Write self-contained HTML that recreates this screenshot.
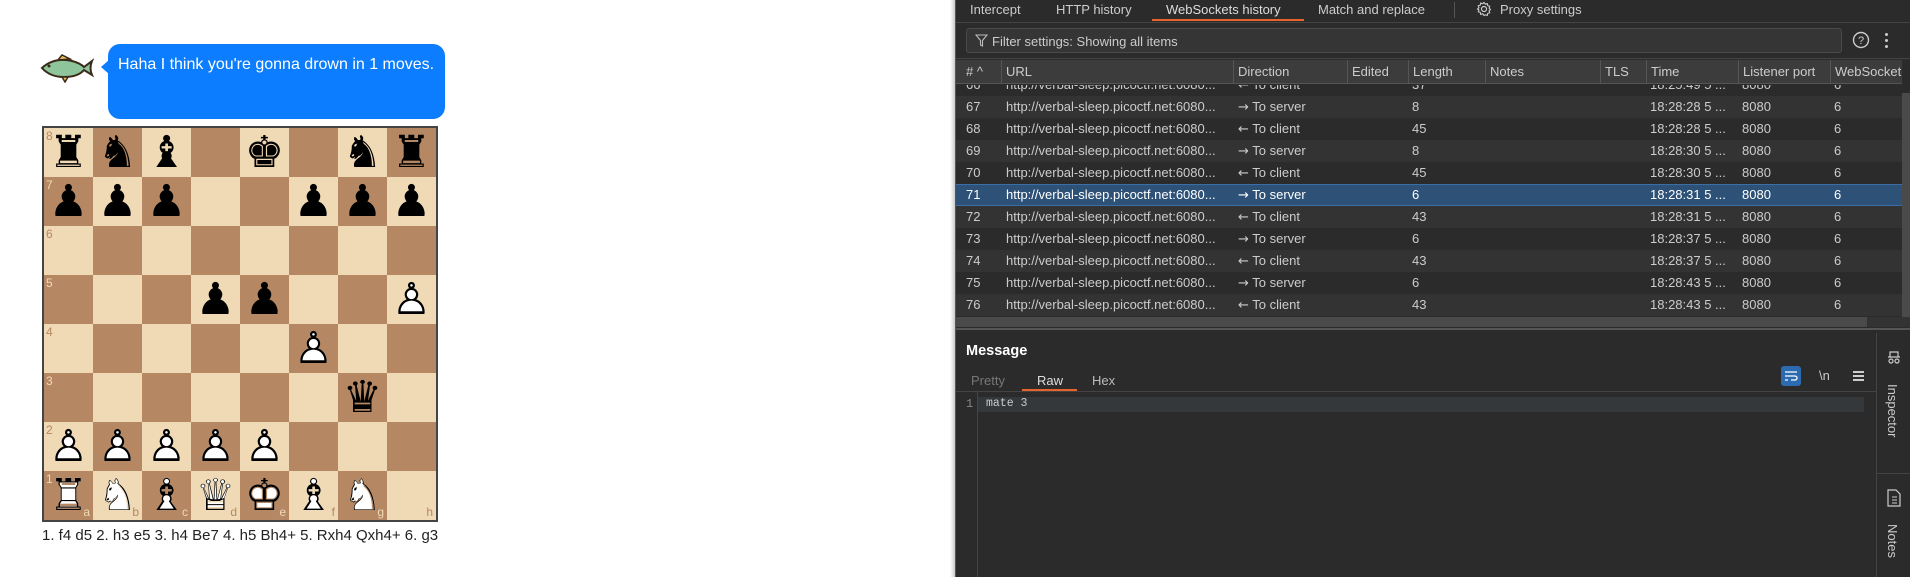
<!DOCTYPE html>
<html><head><meta charset="utf-8"><style>
*{margin:0;padding:0;box-sizing:border-box}
body{width:1910px;height:577px;overflow:hidden;background:#fff;font-family:"Liberation Sans","DejaVu Sans",sans-serif;position:relative}
.abs{position:absolute}
.bubble{left:108px;top:44px;width:337px;height:75px;background:#0b7dfe;border-radius:12px;color:#fff;font-size:16px;padding:12px 0 0 10px;white-space:nowrap}
.bubble:before{content:"";position:absolute;left:-7px;top:16px;border-right:8px solid #0b7dfe;border-top:7px solid transparent;border-bottom:7px solid transparent}
.board{left:42px;top:126px;width:396px;height:396px;border:2px solid #444;display:grid;grid-template-columns:repeat(8,49px);grid-template-rows:repeat(8,49px)}
.sq{position:relative;font-family:"DejaVu Sans",sans-serif;font-size:44px;line-height:49px;text-align:center;color:#000}
.w{position:relative;display:inline-block}
.w i{font-style:normal;position:absolute;left:0;top:0;color:#fff}
.w b{font-weight:normal;position:relative}
.rk{position:absolute;left:2px;top:1px;font-size:12px;line-height:14px;font-family:"Liberation Sans",sans-serif}
.fl{position:absolute;right:3px;bottom:1px;font-size:12px;line-height:14px;font-family:"Liberation Sans",sans-serif}
.l{background:#f0d9b5}.d{background:#b58863}
.l .rk,.l .fl{color:#b58863}.d .rk,.d .fl{color:#f0d9b5}
.moves{left:42px;top:527px;font-size:15px;color:#222}
.panel{left:955px;top:0;width:955px;height:577px;background:#2b2b2b;border-left:1px solid #555;color:#ccc;font-size:13px}
.shadow{left:950px;top:0;width:5px;height:577px;background:linear-gradient(to right,#fff,#ccc)}
.tab{position:absolute;top:2px;color:#ccc;font-size:13px}
.hdr{position:absolute;top:60px;left:0;width:946px;height:24px;background:#3c3c3c;border-bottom:1px solid #555}
.hc{position:absolute;top:0;height:24px;line-height:24px;border-left:1px solid #555;padding-left:4px;color:#ccc}
.row{position:absolute;left:0;width:946px;height:22px;line-height:22px;color:#ccc}
.row > span{position:absolute;top:0}
.ar{font-family:"DejaVu Sans",sans-serif;font-size:13px;position:static}
</style></head><body>
<svg class="abs" style="left:38px;top:53px" width="56" height="30" viewBox="0 0 56 30">
<path d="M4 15 Q16 4 34 8 Q42 10 46 14 L54 8 Q51 15 54 22 L46 17 Q40 24 26 24 Q12 24 4 15Z" fill="#8fc59a" stroke="#3a2a1a" stroke-width="2"/>
<path d="M20 7 L24 2 L32 6Z M24 24 L27 29 L30 24Z" fill="#e8c15a" stroke="#3a2a1a" stroke-width="1.5"/>
<circle cx="11" cy="13" r="1.5" fill="#3a2a1a"/>
</svg>
<div class="abs bubble">Haha I think you're gonna drown in 1 moves.</div>
<div class="abs board">
<div class="sq l"><span class="rk">8</span>♜</div><div class="sq d">♞</div><div class="sq l">♝</div><div class="sq d"></div><div class="sq l">♚</div><div class="sq d"></div><div class="sq l">♞</div><div class="sq d">♜</div>
<div class="sq d"><span class="rk">7</span>♟</div><div class="sq l">♟</div><div class="sq d">♟</div><div class="sq l"></div><div class="sq d"></div><div class="sq l">♟</div><div class="sq d">♟</div><div class="sq l">♟</div>
<div class="sq l"><span class="rk">6</span></div><div class="sq d"></div><div class="sq l"></div><div class="sq d"></div><div class="sq l"></div><div class="sq d"></div><div class="sq l"></div><div class="sq d"></div>
<div class="sq d"><span class="rk">5</span></div><div class="sq l"></div><div class="sq d"></div><div class="sq l">♟</div><div class="sq d">♟</div><div class="sq l"></div><div class="sq d"></div><div class="sq l"><span class="w"><i>♟</i><b>♙</b></span></div>
<div class="sq l"><span class="rk">4</span></div><div class="sq d"></div><div class="sq l"></div><div class="sq d"></div><div class="sq l"></div><div class="sq d"><span class="w"><i>♟</i><b>♙</b></span></div><div class="sq l"></div><div class="sq d"></div>
<div class="sq d"><span class="rk">3</span></div><div class="sq l"></div><div class="sq d"></div><div class="sq l"></div><div class="sq d"></div><div class="sq l"></div><div class="sq d">♛</div><div class="sq l"></div>
<div class="sq l"><span class="rk">2</span><span class="w"><i>♟</i><b>♙</b></span></div><div class="sq d"><span class="w"><i>♟</i><b>♙</b></span></div><div class="sq l"><span class="w"><i>♟</i><b>♙</b></span></div><div class="sq d"><span class="w"><i>♟</i><b>♙</b></span></div><div class="sq l"><span class="w"><i>♟</i><b>♙</b></span></div><div class="sq d"></div><div class="sq l"></div><div class="sq d"></div>
<div class="sq d"><span class="rk">1</span><span class="w"><i>♜</i><b>♖</b></span><span class="fl">a</span></div><div class="sq l"><span class="w"><i>♞</i><b>♘</b></span><span class="fl">b</span></div><div class="sq d"><span class="w"><i>♝</i><b>♗</b></span><span class="fl">c</span></div><div class="sq l"><span class="w"><i>♛</i><b>♕</b></span><span class="fl">d</span></div><div class="sq d"><span class="w"><i>♚</i><b>♔</b></span><span class="fl">e</span></div><div class="sq l"><span class="w"><i>♝</i><b>♗</b></span><span class="fl">f</span></div><div class="sq d"><span class="w"><i>♞</i><b>♘</b></span><span class="fl">g</span></div><div class="sq l"><span class="fl">h</span></div>
</div>
<div class="abs moves">1. f4 d5 2. h3 e5 3. h4 Be7 4. h5 Bh4+ 5. Rxh4 Qxh4+ 6. g3</div>

<div class="abs shadow"></div>
<div class="abs panel">
 <div class="tab" style="left:14px">Intercept</div>
 <div class="tab" style="left:100px">HTTP history</div>
 <div class="tab" style="left:210px;color:#ddd">WebSockets history</div>
 <div class="abs" style="left:196px;top:19px;width:152px;height:2px;background:#e8622c"></div>
 <div class="tab" style="left:362px">Match and replace</div>
 <div class="abs" style="left:498px;top:2px;width:1px;height:16px;background:#555"></div>
 <svg class="abs" style="left:520px;top:1px" width="16" height="16" viewBox="0 0 16 16"><circle cx="8" cy="8" r="2.5" fill="none" stroke="#ccc" stroke-width="1.2"/><path d="M8 1.5l1.3 1.7 2-.6.4 2 2 .6-.6 2 1.4 1.3-1.4 1.3.6 2-2 .6-.4 2-2-.6L8 14.5l-1.3-1.7-2 .6-.4-2-2-.6.6-2L1.5 8l1.4-1.3-.6-2 2-.6.4-2 2 .6z" fill="none" stroke="#ccc" stroke-width="1.1"/></svg>
 <div class="tab" style="left:544px">Proxy settings</div>
 <div class="abs" style="left:0;top:22px;width:955px;height:1px;background:#444"></div>
 <div class="abs" style="left:10px;top:28px;width:876px;height:25px;background:#353535;border:1px solid #4a4a4a;border-radius:3px"></div>
 <svg class="abs" style="left:19px;top:34px" width="13" height="13" viewBox="0 0 13 13"><path d="M1 1h11L7.5 6.5V12L5.5 11V6.5z" fill="none" stroke="#bbb" stroke-width="1.1"/></svg>
 <div class="abs" style="left:36px;top:34px;color:#ccc">Filter settings: Showing all items</div>
 <svg class="abs" style="left:896px;top:31px" width="18" height="18" viewBox="0 0 18 18"><circle cx="9" cy="9" r="7.5" fill="none" stroke="#ccc" stroke-width="1.4"/><text x="9" y="13" text-anchor="middle" font-size="11" fill="#ccc" font-family="Liberation Sans">?</text></svg>
 <div class="abs" style="left:929px;top:33px;width:3px;height:3px;background:#ccc;border-radius:2px;box-shadow:0 6px #ccc,0 12px #ccc"></div>
 <div class="abs" style="left:0;top:58px;width:955px;height:1px;background:#444"></div>
 <div class="hdr">
  <div class="hc" style="left:0;border:0;padding-left:10px"># ^</div>
  <div class="hc" style="left:45px">URL</div>
  <div class="hc" style="left:277px">Direction</div>
  <div class="hc" style="left:391px">Edited</div>
  <div class="hc" style="left:452px">Length</div>
  <div class="hc" style="left:529px">Notes</div>
  <div class="hc" style="left:644px">TLS</div>
  <div class="hc" style="left:690px">Time</div>
  <div class="hc" style="left:782px">Listener port</div>
  <div class="hc" style="left:874px">WebSocket</div>
 </div>
 <div class="abs" style="left:0;top:85px;width:946px;height:232px;overflow:hidden">
  <div class="row" style="top:-11px;background:#2b2b2b"><span style="left:10px">66</span><span style="left:50px">http://verbal-sleep.picoctf.net:6080...</span><span style="left:282px"><span class="ar">←</span> To client</span><span style="left:456px">37</span><span style="left:694px">18:25:49 5 ...</span><span style="left:786px">8080</span><span style="left:878px">6</span></div>
  <div class="row" style="top:11px;background:#333"><span style="left:10px">67</span><span style="left:50px">http://verbal-sleep.picoctf.net:6080...</span><span style="left:282px"><span class="ar">→</span> To server</span><span style="left:456px">8</span><span style="left:694px">18:28:28 5 ...</span><span style="left:786px">8080</span><span style="left:878px">6</span></div>
  <div class="row" style="top:33px;background:#2b2b2b"><span style="left:10px">68</span><span style="left:50px">http://verbal-sleep.picoctf.net:6080...</span><span style="left:282px"><span class="ar">←</span> To client</span><span style="left:456px">45</span><span style="left:694px">18:28:28 5 ...</span><span style="left:786px">8080</span><span style="left:878px">6</span></div>
  <div class="row" style="top:55px;background:#333"><span style="left:10px">69</span><span style="left:50px">http://verbal-sleep.picoctf.net:6080...</span><span style="left:282px"><span class="ar">→</span> To server</span><span style="left:456px">8</span><span style="left:694px">18:28:30 5 ...</span><span style="left:786px">8080</span><span style="left:878px">6</span></div>
  <div class="row" style="top:77px;background:#2b2b2b"><span style="left:10px">70</span><span style="left:50px">http://verbal-sleep.picoctf.net:6080...</span><span style="left:282px"><span class="ar">←</span> To client</span><span style="left:456px">45</span><span style="left:694px">18:28:30 5 ...</span><span style="left:786px">8080</span><span style="left:878px">6</span></div>
  <div class="row" style="top:99px;background:#2d5177;color:#fff;border-top:1px solid #3a6ea5;border-bottom:1px solid #3a6ea5;line-height:20px"><span style="left:10px">71</span><span style="left:50px">http://verbal-sleep.picoctf.net:6080...</span><span style="left:282px"><span class="ar">→</span> To server</span><span style="left:456px">6</span><span style="left:694px">18:28:31 5 ...</span><span style="left:786px">8080</span><span style="left:878px">6</span></div>
  <div class="row" style="top:121px;background:#333"><span style="left:10px">72</span><span style="left:50px">http://verbal-sleep.picoctf.net:6080...</span><span style="left:282px"><span class="ar">←</span> To client</span><span style="left:456px">43</span><span style="left:694px">18:28:31 5 ...</span><span style="left:786px">8080</span><span style="left:878px">6</span></div>
  <div class="row" style="top:143px;background:#2b2b2b"><span style="left:10px">73</span><span style="left:50px">http://verbal-sleep.picoctf.net:6080...</span><span style="left:282px"><span class="ar">→</span> To server</span><span style="left:456px">6</span><span style="left:694px">18:28:37 5 ...</span><span style="left:786px">8080</span><span style="left:878px">6</span></div>
  <div class="row" style="top:165px;background:#333"><span style="left:10px">74</span><span style="left:50px">http://verbal-sleep.picoctf.net:6080...</span><span style="left:282px"><span class="ar">←</span> To client</span><span style="left:456px">43</span><span style="left:694px">18:28:37 5 ...</span><span style="left:786px">8080</span><span style="left:878px">6</span></div>
  <div class="row" style="top:187px;background:#2b2b2b"><span style="left:10px">75</span><span style="left:50px">http://verbal-sleep.picoctf.net:6080...</span><span style="left:282px"><span class="ar">→</span> To server</span><span style="left:456px">6</span><span style="left:694px">18:28:43 5 ...</span><span style="left:786px">8080</span><span style="left:878px">6</span></div>
  <div class="row" style="top:209px;background:#333"><span style="left:10px">76</span><span style="left:50px">http://verbal-sleep.picoctf.net:6080...</span><span style="left:282px"><span class="ar">←</span> To client</span><span style="left:456px">43</span><span style="left:694px">18:28:43 5 ...</span><span style="left:786px">8080</span><span style="left:878px">6</span></div>
 </div>
 <div class="abs" style="left:946px;top:85px;width:9px;height:232px;background:#2b2b2b"><div style="margin:8px 0 0 0;width:9px;height:224px;background:#4a4a4a"></div></div>
 <div class="abs" style="left:0;top:317px;width:955px;height:10px;background:#333"><div style="width:911px;height:10px;background:#4a4a4a"></div></div>
 <div class="abs" style="left:0;top:328px;width:955px;height:2px;background:#555"></div>
 <div class="abs" style="left:10px;top:343px;font-size:14.5px;font-weight:bold;color:#fff">Message</div>
 <div class="abs" style="left:15px;top:373px;color:#777">Pretty</div>
 <div class="abs" style="left:81px;top:373px;color:#ddd">Raw</div>
 <div class="abs" style="left:136px;top:373px;color:#bbb">Hex</div>
 <div class="abs" style="left:66px;top:389px;width:55px;height:2px;background:#e8622c"></div>
 <div class="abs" style="left:0;top:391px;width:920px;height:1px;background:#444"></div>
 <div class="abs" style="left:825px;top:366px;width:20px;height:20px;background:#2d6bb0;border-radius:3px"></div>
 <svg class="abs" style="left:828px;top:370px" width="14" height="12" viewBox="0 0 14 12"><path d="M1 2h12M1 6h10a2 2 0 010 4H7M1 10h3" fill="none" stroke="#fff" stroke-width="1.3"/></svg>
 <div class="abs" style="left:863px;top:368px;color:#ccc">\n</div>
 <div class="abs" style="left:897px;top:371px;width:11px;height:2px;background:#ccc;box-shadow:0 4px #ccc,0 8px #ccc"></div>
 <div class="abs" style="left:21px;top:392px;width:1px;height:185px;background:#444"></div>
 <div class="abs" style="left:10px;top:397px;color:#888;font-family:'Liberation Mono',monospace;font-size:12px">1</div>
 <div class="abs" style="left:22px;top:397px;width:886px;height:15px;background:#35383b"></div>
 <div class="abs" style="left:30px;top:397px;color:#ccc;font-family:'Liberation Mono',monospace;font-size:11.5px;line-height:14px">mate 3</div>
 <div class="abs" style="left:920px;top:333px;width:1px;height:244px;background:#444"></div>
 <div class="abs" style="left:920px;top:473px;width:35px;height:1px;background:#444"></div>
 <svg class="abs" style="left:929px;top:349px" width="18" height="16" viewBox="0 0 18 16"><path d="M3 8h12M5 8V3h8v5" fill="none" stroke="#ccc" stroke-width="1.2"/><circle cx="6" cy="12" r="2" fill="none" stroke="#ccc" stroke-width="1.2"/><circle cx="12" cy="12" r="2" fill="none" stroke="#ccc" stroke-width="1.2"/></svg>
 <div class="abs" style="left:929px;top:384px;writing-mode:vertical-rl;color:#ccc;font-size:13px">Inspector</div>
 <svg class="abs" style="left:930px;top:489px" width="16" height="18" viewBox="0 0 16 18"><path d="M2 1h8l4 4v12H2z" fill="none" stroke="#ccc" stroke-width="1.2"/><path d="M6 8h5M6 11h5M6 14h5" stroke="#ccc" stroke-width="1.1"/></svg>
 <div class="abs" style="left:929px;top:524px;writing-mode:vertical-rl;color:#ccc;font-size:13px">Notes</div>
</div>
</body></html>
